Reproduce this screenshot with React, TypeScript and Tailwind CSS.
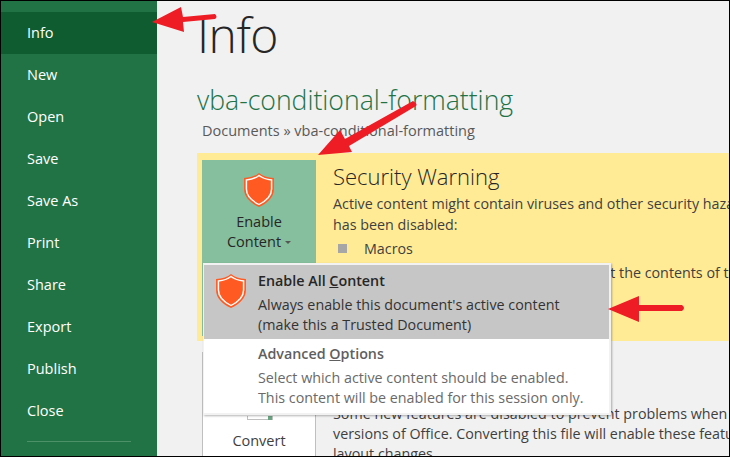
const font = "[font-family:'Open_Sans',sans-serif]";

const menu = ["Info", "New", "Open", "Save", "Save As", "Print", "Share", "Export", "Publish", "Close"];

function Shield({ className }: { className: string }) {
  return (
    <svg viewBox="0 0 30 36" preserveAspectRatio="none" className={className}>
      <path
        d="M15 1 C18 4 23 5.500 29 6 L29 17 C29 25 23 31 15 35 C7 31 1 25 1 17 L1 6 C7 5.500 12 4 15 1 Z"
        fill="#ff5a22"
      />
      <path
        d="M15 3.500 C18 6 22 7.500 26.800 8 L26.800 17 C26.800 24 21.500 29 15 32.500 C8.500 29 3.200 24 3.200 17 L3.200 8 C8 7.500 12 6 15 3.500 Z"
        fill="none"
        stroke="#fff"
        strokeWidth="1.400"
      />
    </svg>
  );
}

function Sidebar() {
  return (
    <aside className="w-[156px] shrink-0 bg-[#217346] pt-[11px] flex flex-col">
      {menu.map((item) => (
        <div
          key={item}
          className={`h-[42px] shrink-0 flex items-center pl-[26px] text-[14.500px] text-white ${
            item === "Info" ? "bg-[#0e5c2f]" : ""
          }`}
        >
          {item}
        </div>
      ))}
      <div className="ml-[26px] mt-[9px] w-[104px] h-px bg-[#4d9168]" />
    </aside>
  );
}

function SecurityPanel() {
  return (
    <section className="h-[188px] shrink-0 bg-[#ffeb96] flex pl-[5px] pt-[7px]">
      <div className="w-[114px] h-[176px] shrink-0 bg-[#86bf9d] flex flex-col items-center pt-[12px] text-[14.500px] leading-[20px] text-[#262626]">
        <Shield className="w-[32px] h-[36px] mb-[4px]" />
        <span>Enable</span>
        <span className="flex items-center gap-[4px]">
          Content
          <span className="border-x-[3px] border-t-[3px] border-x-transparent border-t-[#555]" />
        </span>
      </div>
      <div className="pl-[17px] text-[14.300px] leading-[21px] text-[#3f3f3f] whitespace-nowrap">
        <h2 className="text-[22px] leading-[30px] pt-[1px] h-[31px] font-light text-[#262626]">Security Warning</h2>
        <p className="mt-[2px]">Active content might contain viruses and other security hazards, which</p>
        <p>has been disabled:</p>
        <div className="flex items-center mt-[3px] h-[21px]">
          <span className="w-[9px] h-[9px] bg-[#a6a6a6] ml-[5px] mr-[17px]" />
          Macros
        </div>
        <p className="mt-[3px]">Please enable this content only if you trust the contents of this file.</p>
      </div>
    </section>
  );
}

function ConvertRow() {
  return (
    <section className="flex flex-1 pl-[5px] pt-[11px] min-h-0">
      <div className="w-[114px] h-[110px] shrink-0 bg-white border-x border-[#bfbfbf] flex flex-col items-center">
        <div className="mt-[64px] ml-[1px] self-center w-[26px] h-[4px] flex justify-end border-x border-b border-[#bfbfbf]">
          <span className="w-[4px] h-[4px] bg-[#6aa583]" />
        </div>
        <span className="mt-[11px] text-[14.500px] leading-[20px] text-[#3f3f3f]">Convert</span>
      </div>
      <div className="pl-[17px] pt-[52px] text-[14.300px] leading-[20px] text-[#3f3f3f] whitespace-nowrap">
        <p>Some new features are disabled to prevent problems when working with</p>
        <p>versions of Office. Converting this file will enable these features, but may</p>
        <p>layout changes.</p>
      </div>
    </section>
  );
}

function Dropdown() {
  return (
    <div className="absolute left-[202px] top-[262px] w-[408px] h-[152px] bg-white border-2 border-l border-[#f2f2f2] shadow-[1px_1px_2px_rgba(0,0,0,0.3)] text-[14.300px] leading-[20px] whitespace-nowrap">
      <div className="h-[74px] bg-[#c6c6c6] flex pl-[11px] pt-[6px] text-[#333]">
        <Shield className="w-[32px] h-[36px] mr-[11px] shrink-0 mt-[2px]" />
        <div>
          <p className="font-semibold text-[#262626]">
            Enable All <span className="underline">C</span>ontent
          </p>
          <p className="mt-[4px]">Always enable this document's active content</p>
          <p>(make this a Trusted Document)</p>
        </div>
      </div>
      <div className="pl-[54px] pt-[5px] text-[#6a6a6a]">
        <p className="font-semibold text-[#5f5f5f]">
          Advanced <span className="underline">O</span>ptions
        </p>
        <p className="mt-[4px]">Select which active content should be enabled.</p>
        <p>This content will be enabled for this session only.</p>
      </div>
    </div>
  );
}

function Arrows() {
  return (
    <svg viewBox="0 0 730 457" className="absolute -left-px -top-px w-[730px] h-[457px] pointer-events-none">
      <g fill="#ee1c25">
        <path d="M152 22 L181 7 L183 17 L215 14 Q218 17 215 19 L183 22 L184 32 Z" />
        <path d="M318 155 L340 130 L345 139 L413 101 Q418 104 416 106 L349 146 L352 152 Z" />
        <path d="M608 309 L639 296 L639 305 L682 305 Q686 308 682 311 L639 311 L639 322 Z" />
      </g>
    </svg>
  );
}

export default function App() {
  return (
    <div className={`relative w-[730px] h-[457px] overflow-hidden bg-[#f1f1f1] border border-black flex ${font}`}>
      <Sidebar />
      <main className="flex-1 min-w-0 flex flex-col pl-[40px]">
        <h1 className="h-[64px] pt-[3px] text-[48px] leading-[62px] font-light text-[#262626] tracking-[-0.5px]">Info</h1>
        <h2 className="mt-[17px] text-[26.600px] leading-[36px] font-light text-[#217346] whitespace-nowrap">
          vba-conditional-formatting
        </h2>
        <p className="mt-[3px] h-[32px] pl-[5px] text-[14.500px] leading-[20px] text-[#595959]">
          Documents » vba-conditional-formatting
        </p>
        <SecurityPanel />
        <ConvertRow />
      </main>
      <Dropdown />
      <Arrows />
    </div>
  );
}
